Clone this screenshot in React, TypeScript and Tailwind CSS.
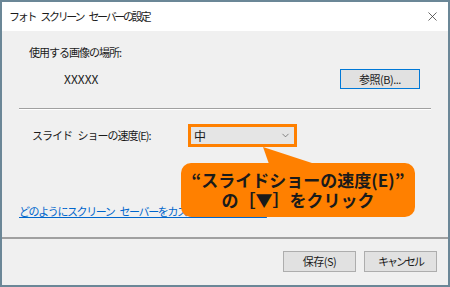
import { ChevronDown, X } from 'lucide-react';

const font = { fontFamily: '"Noto Sans CJK JP", "Noto Sans", sans-serif' };

export default function App() {
  return (
    <div className="relative w-[450px] h-[287px] overflow-hidden" style={font}>
      <div className="w-full h-full flex flex-col border-2 border-[#6b8797] bg-[#f0f0f0] text-[#1a1a1a]">
        {/* title bar */}
        <div className="h-[29px] bg-white flex items-center justify-between pl-[7px] pr-[8px] shrink-0">
          <span className="text-[11px] leading-none tracking-[-2.3px] [word-spacing:5px]">フォト スクリーン セーバーの設定</span>
          <X size={15} strokeWidth={1.2} className="text-[#333]" />
        </div>

        {/* body */}
        <div className="flex-1 flex flex-col px-[17px]">
          <p className="mt-[14px] ml-[10px] text-[11px] leading-[14px] tracking-[-1px]">使用する画像の場所:</p>
          <div className="mt-[10px] flex items-center justify-between h-[20px]">
            <span className="ml-[45px] text-[12px]">XXXXX</span>
            <button className="mr-[11px] w-[80px] h-[20px] bg-[#e1e1e1] border border-[#0078d7] text-[11px] leading-none tracking-[-0.5px]">
              参照(B)...
            </button>
          </div>
          <div className="mt-[19px] h-[2px] border-t border-[#a0a0a0] bg-white" />

          <div className="mt-[14px] flex items-center h-[23px]">
            <span className="ml-[13px] w-[156px] text-[11px] tracking-[-1px] [word-spacing:4px]">スライド ショーの速度(E):</span>
            <div className="w-[109px] h-[23px] border-[3px] border-[#ff8000]">
              <div className="h-full bg-[#e5e5e5] flex items-center justify-between pl-[3px] pr-[3px] text-[12px]">
                <span>中</span>
                <ChevronDown size={11} strokeWidth={1.5} className="text-[#555]" />
              </div>
            </div>
          </div>

          <a className="mt-[57px] text-[11px] leading-[14px] tracking-[-1.4px] [word-spacing:4px] text-[#0066cc] underline whitespace-nowrap">
            どのようにスクリーン セーバーをカスタマイズしますか?
          </a>
        </div>

        {/* footer */}
        <div className="h-[48px] shrink-0 border-t-2 border-[#a0a0a0] flex items-start justify-end gap-[8px] pr-[11px] pt-[12px]">
          <button className="w-[73px] h-[21px] bg-[#e1e1e1] border border-[#adadad] text-[11px] leading-none tracking-[-0.5px]">保存(S)</button>
          <button className="w-[73px] h-[21px] bg-[#e1e1e1] border border-[#adadad] text-[11px] leading-none tracking-[-2px]">キャンセル</button>
        </div>
      </div>

      {/* callout */}
      <svg className="absolute left-[255px] top-[146px]" width="70" height="20" viewBox="0 0 70 20">
        <polygon points="8,1 60,18 14,18" fill="#ff8000" />
      </svg>
      <div className="absolute left-[181px] top-[163px] w-[234px] h-[54px] rounded-[10px] bg-[#ff8000] flex flex-col items-center justify-center text-[17px] leading-[20px] font-bold text-[#1a1a1a]">
        <span>“スライドショーの速度(E)”</span>
        <span>の［▼］をクリック</span>
      </div>
    </div>
  );
}
